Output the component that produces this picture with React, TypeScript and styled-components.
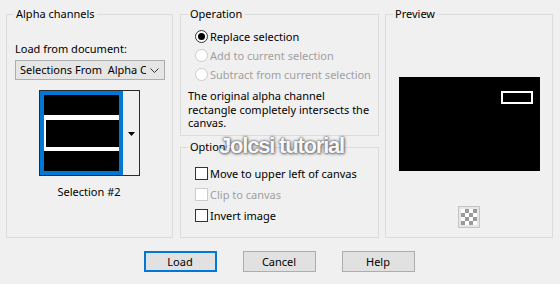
import styled, { createGlobalStyle } from 'styled-components';

const GlobalStyle = createGlobalStyle`
  html, body {
    margin: 0;
    padding: 0;
    background: #f0f0f0;
  }
  body {
    font-family: "Noto Sans", "Open Sans", sans-serif;
    font-size: 11px;
    color: #000;
  }
`;

export default function App() {
  return (
    <>
      <GlobalStyle />
      <Dialog>
        <Panels>
          <Group $width={167} $height={232}>
            <Legend>Alpha channels</Legend>
            <AlphaBody>
              <FieldLabel>Load from document:</FieldLabel>
              <Select>
                <SelectText>Selections From  Alpha C</SelectText>
                <Chevron viewBox="0 0 9 5">
                  <path d="M0.5 0.5 L4.5 4.5 L8.5 0.5" fill="none" stroke="#333" strokeWidth="1" />
                </Chevron>
              </Select>
              <Thumb>
                <ThumbFrame>
                  <svg width="75" height="76" viewBox="0 0 75 76">
                    <rect x="0" y="0" width="75" height="76" fill="#000" />
                    <rect x="0" y="20" width="75" height="36" fill="#fff" />
                    <rect x="2" y="25" width="73" height="27" fill="#000" />
                  </svg>
                </ThumbFrame>
                <ThumbDrop>
                  <svg width="7" height="4" viewBox="0 0 7 4">
                    <path d="M0 0 H7 L3.5 4 Z" fill="#000" />
                  </svg>
                </ThumbDrop>
              </Thumb>
              <Caption>Selection #2</Caption>
            </AlphaBody>
          </Group>

          <Column>
            <Group $width={199} $height={130}>
              <Legend>Operation</Legend>
              <RadioList>
                <OptionRow>
                  <Radio $checked />
                  Replace selection
                </OptionRow>
                <OptionRow $disabled>
                  <Radio $disabled />
                  Add to current selection
                </OptionRow>
                <OptionRow $disabled>
                  <Radio $disabled />
                  Subtract from current selection
                </OptionRow>
              </RadioList>
              <Note>
                The original alpha channel
                <br />
                rectangle completely intersects the
                <br />
                canvas.
              </Note>
            </Group>
            <Group $width={199} $height={99}>
              <Legend>Options</Legend>
              <CheckList>
                <CheckRow>
                  <Check />
                  Move to upper left of canvas
                </CheckRow>
                <CheckRow $disabled>
                  <Check $disabled />
                  Clip to canvas
                </CheckRow>
                <CheckRow>
                  <Check />
                  Invert image
                </CheckRow>
              </CheckList>
            </Group>
          </Column>

          <Group $width={168} $height={232}>
            <Legend>Preview</Legend>
            <PreviewBody>
              <PreviewCanvas>
                <svg width="141" height="94" viewBox="0 0 141 94">
                  <rect x="0" y="0" width="141" height="94" fill="#000" />
                  <rect x="103" y="15" width="30" height="11" fill="none" stroke="#fff" strokeWidth="2" />
                </svg>
              </PreviewCanvas>
              <IconButton>
                <svg width="16" height="16" viewBox="0 0 16 16">
                  <rect width="16" height="16" fill="#fff" />
                  <rect x="4" y="0" width="4" height="4" fill="#9a9a9a" />
                  <rect x="12" y="0" width="4" height="4" fill="#9a9a9a" />
                  <rect x="0" y="4" width="4" height="4" fill="#9a9a9a" />
                  <rect x="8" y="4" width="4" height="4" fill="#9a9a9a" />
                  <rect x="4" y="8" width="4" height="4" fill="#9a9a9a" />
                  <rect x="12" y="8" width="4" height="4" fill="#9a9a9a" />
                  <rect x="0" y="12" width="4" height="4" fill="#9a9a9a" />
                  <rect x="8" y="12" width="4" height="4" fill="#9a9a9a" />
                </svg>
              </IconButton>
            </PreviewBody>
          </Group>
        </Panels>

        <Buttons>
          <Button $default>Load</Button>
          <Button>Cancel</Button>
          <Button>Help</Button>
        </Buttons>

        <Watermark>Jolcsi tutorial</Watermark>
      </Dialog>
    </>
  );
}

const Dialog = styled.div`
  position: relative;
  width: 560px;
  height: 284px;
  box-sizing: border-box;
  padding: 6px 7px 0 6px;
  background: #f0f0f0;
  overflow: hidden;
`;

const Panels = styled.div`
  display: flex;
  gap: 7px;

  & > :last-child {
    margin-left: -1px;
  }
`;

const Column = styled.div`
  display: flex;
  flex-direction: column;
  gap: 3px;
`;

const Group = styled.fieldset<{ $width: number; $height: number }>`
  margin: 0;
  padding: 0;
  min-width: 0;
  box-sizing: border-box;
  width: ${({ $width }) => $width}px;
  height: ${({ $height }) => $height}px;
  border: 1px solid #dcdcdc;
`;

const Legend = styled.legend`
  margin-left: 7px;
  padding: 0 2px;
  line-height: 16px;
`;

const AlphaBody = styled.div`
  display: flex;
  flex-direction: column;
  padding: 19px 7px 0 8px;
`;

const FieldLabel = styled.div`
  line-height: 16px;
`;

const Select = styled.div`
  margin-top: 3px;
  display: flex;
  align-items: center;
  box-sizing: border-box;
  width: 150px;
  height: 20px;
  padding: 0 5px 0 4px;
  border: 1px solid #adadad;
  background: #e5e5e5;
`;

const SelectText = styled.span`
  flex: 1;
  overflow: hidden;
  white-space: pre;
  line-height: 16px;
`;

const Chevron = styled.svg`
  width: 9px;
  height: 5px;
  margin-left: 4px;
`;

const Thumb = styled.div`
  display: flex;
  align-self: center;
  margin-top: 10px;
  margin-left: -1px;
  box-sizing: border-box;
  width: 101px;
  height: 86px;
  border: 1px solid #2b2b2b;
`;

const ThumbFrame = styled.div`
  display: flex;
  border: 4px solid #0078d7;

  & > svg {
    display: block;
  }
`;

const ThumbDrop = styled.div`
  flex: 1;
  display: flex;
  align-items: center;
  justify-content: center;
  background: #f0f0f0;
  padding-top: 2px;
`;

const Caption = styled.div`
  margin-top: 8px;
  margin-left: -2px;
  text-align: center;
  line-height: 16px;
`;

const RadioList = styled.div`
  display: flex;
  flex-direction: column;
  padding: 5px 0 0 14px;
`;

const OptionRow = styled.div<{ $disabled?: boolean }>`
  display: flex;
  align-items: center;
  gap: 2px;
  height: 19px;
  color: ${({ $disabled }) => ($disabled ? '#a0a0a0' : '#000')};
`;

const Radio = styled.span<{ $checked?: boolean; $disabled?: boolean }>`
  display: flex;
  align-items: center;
  justify-content: center;
  box-sizing: border-box;
  width: 13px;
  height: 13px;
  border-radius: 50%;
  border: 1px solid ${({ $disabled }) => ($disabled ? '#cccccc' : '#333333')};
  background: #fff;

  &::after {
    content: '';
    display: ${({ $checked }) => ($checked ? 'block' : 'none')};
    width: 7px;
    height: 7px;
    border-radius: 50%;
    background: #000;
  }
`;

const Note = styled.div`
  margin-top: 5px;
  padding-left: 7px;
  line-height: 13.5px;
`;

const CheckList = styled.div`
  display: flex;
  flex-direction: column;
  padding: 8px 0 0 14px;
`;

const CheckRow = styled.div<{ $disabled?: boolean }>`
  display: flex;
  align-items: center;
  gap: 2px;
  height: 21px;
  color: ${({ $disabled }) => ($disabled ? '#a0a0a0' : '#000')};
`;

const Check = styled.span<{ $disabled?: boolean }>`
  box-sizing: border-box;
  width: 13px;
  height: 13px;
  border: 1px solid ${({ $disabled }) => ($disabled ? '#cccccc' : '#333333')};
  background: #fff;
`;

const PreviewBody = styled.div`
  display: flex;
  flex-direction: column;
  align-items: center;
  padding-top: 55px;

  & svg {
    display: block;
  }
`;

const PreviewCanvas = styled.div`
  width: 141px;
  height: 94px;
`;

const IconButton = styled.div`
  margin-top: 35px;
  display: flex;
  align-items: center;
  justify-content: center;
  box-sizing: border-box;
  width: 22px;
  height: 22px;
  border: 1px solid #c4c4c4;
  background: #e6e6e6;
`;

const Buttons = styled.div`
  display: flex;
  justify-content: center;
  gap: 26px;
  margin-top: 13px;
  padding-right: 1px;
`;

const Button = styled.button<{ $default?: boolean }>`
  box-sizing: border-box;
  width: 73px;
  height: 21px;
  padding: 0;
  font-family: inherit;
  font-size: 11px;
  color: #000;
  background: #e1e1e1;
  border: ${({ $default }) => ($default ? '2px solid #0078d7' : '1px solid #adadad')};
  border-radius: 0;
`;

const Watermark = styled.div`
  position: absolute;
  left: 219px;
  top: 133px;
  font-family: "Liberation Sans", Arial, sans-serif;
  font-weight: bold;
  font-size: 22px;
  letter-spacing: -1.2px;
  color: #fafafa;
  opacity: 0.85;
  text-shadow: 0 0 2px #444, 0 0 3px #666, 1px 1px 3px #777;
  pointer-events: none;
`;
